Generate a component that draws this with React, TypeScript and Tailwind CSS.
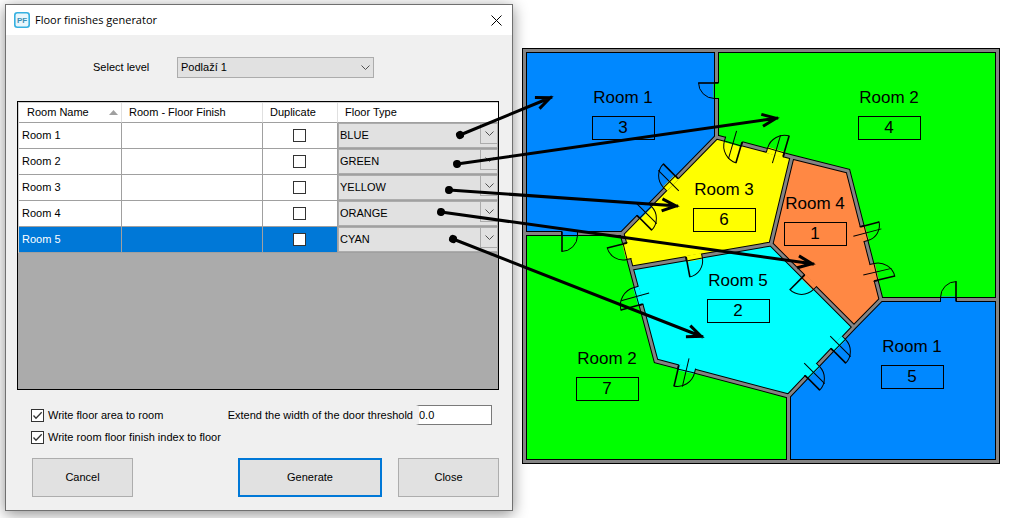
import { useState } from "react"

type Point = [number, number]

interface Room {
  id: number
  name: string
  floorType: string
}

interface DoorProps {
  hinge: Point
  latch: Point
  side: 1 | -1
  fill: string
  axis?: boolean
}

const BLUE = "#0088ff"
const GREEN = "#00ff00"
const YELLOW = "#ffff00"
const ORANGE = "#ff8844"
const CYAN = "#00ffff"

const floorTypes = ["BLUE", "GREEN", "YELLOW", "ORANGE", "CYAN"]

const initialRooms: Room[] = [
  { id: 1, name: "Room 1", floorType: "BLUE" },
  { id: 2, name: "Room 2", floorType: "GREEN" },
  { id: 3, name: "Room 3", floorType: "YELLOW" },
  { id: 4, name: "Room 4", floorType: "ORANGE" },
  { id: 5, name: "Room 5", floorType: "CYAN" },
]

const areas = [
  { fill: BLUE, points: "524,50 716,50 716,137 622,233 524,233" },
  { fill: GREEN, points: "716,50 998,50 998,300 881,300 848,171 716,137" },
  { fill: YELLOW, points: "716,137 792,158 771,244 632,268 622,233" },
  { fill: ORANGE, points: "792,158 848,171 881,300 854,327 771,244" },
  { fill: CYAN, points: "771,244 854,327 788,396 656,361 632,268" },
  { fill: GREEN, points: "524,233 622,233 656,361 788,396 788,462 524,462" },
  { fill: BLUE, points: "881,300 998,300 998,462 788,462 788,396" },
]

const wallPath = [
  "M524.5 50.5H997.5V461.5H524.5Z",
  "M716.5 50.5V137L622 233.5H524.5",
  "M716.5 137L792 157L848 171L881 299.5L854 327L788.5 396V461.5",
  "M792 157L771 244L854 327",
  "M771 244L632 268",
  "M622 233.5L656 361L788.5 396",
  "M881 299.5H997.5",
].join("")

const doors: DoorProps[] = [
  { hinge: [716.5, 82.5], latch: [716.5, 98.5], side: 1, fill: GREEN },
  { hinge: [742, 144], latch: [725, 139], side: -1, fill: GREEN, axis: true },
  { hinge: [784, 155], latch: [767, 150], side: 1, fill: YELLOW, axis: true },
  { hinge: [677, 177], latch: [665, 189], side: 1, fill: YELLOW, axis: true },
  { hinge: [638, 217], latch: [650, 205], side: 1, fill: BLUE, axis: true },
  { hinge: [561.5, 233.5], latch: [577.5, 233.5], side: 1, fill: BLUE },
  { hinge: [625, 243], latch: [629, 259], side: 1, fill: YELLOW },
  { hinge: [641, 305], latch: [636, 287], side: -1, fill: CYAN, axis: true },
  { hinge: [686, 259], latch: [702, 256], side: 1, fill: YELLOW },
  { hinge: [803, 276], latch: [815, 288], side: 1, fill: ORANGE },
  { hinge: [862, 226], latch: [866, 241], side: -1, fill: ORANGE, axis: true },
  { hinge: [876, 281], latch: [872, 264], side: 1, fill: ORANGE, axis: true },
  { hinge: [956.5, 299.5], latch: [940.5, 299.5], side: 1, fill: BLUE },
  { hinge: [678, 367], latch: [695, 371], side: 1, fill: CYAN, axis: true },
  { hinge: [832, 350], latch: [844, 338], side: 1, fill: CYAN, axis: true },
  { hinge: [806, 377], latch: [818, 365], side: 1, fill: CYAN, axis: true },
]

const tags = [
  { x: 592, y: 116, name: "Room 1", index: 3 },
  { x: 858, y: 116, name: "Room 2", index: 4 },
  { x: 693, y: 208, name: "Room 3", index: 6 },
  { x: 784, y: 222, name: "Room 4", index: 1 },
  { x: 707, y: 299, name: "Room 5", index: 2 },
  { x: 576, y: 377, name: "Room 2", index: 7 },
  { x: 881, y: 365, name: "Room 1", index: 5 },
]

const arrows: { from: Point; to: Point }[] = [
  { from: [460, 135], to: [552, 97] },
  { from: [457, 164], to: [778, 118] },
  { from: [449, 190], to: [678, 206] },
  { from: [441, 212], to: [814, 264] },
  { from: [453, 239], to: [703, 337] },
]

function Door({ hinge, latch, side, fill, axis }: DoorProps) {
  const dx = latch[0] - hinge[0]
  const dy = latch[1] - hinge[1]
  const length = Math.hypot(dx, dy)
  const angle = (Math.atan2(dy, dx) * 180) / Math.PI

  return (
    <g transform={`translate(${hinge[0]} ${hinge[1]}) rotate(${angle}) scale(1 ${side})`} stroke="#000" fill="none">
      <rect x={0} y={-3} width={length} height={6} fill={fill} stroke="none" />
      <path d={`M0 -2.5V2.5M${length} -2.5V2.5M0 2H${length}`} strokeWidth={1} />
      <path d={`M0.5 -2V${length + 2}`} strokeWidth={1.6} />
      <path d={`M0 ${length + 2}A${length} ${length} 0 0 0 ${length} 2`} strokeWidth={1} />
      {axis && <path d={`M${length / 2} -11V18`} strokeWidth={1} />}
    </g>
  )
}

function FloorPlan() {
  return (
    <svg
      viewBox="522 48 478 416"
      className="mt-11 block h-auto w-full font-['Liberation_Sans',Arial,sans-serif] text-[17px]"
      role="img"
      aria-label="Floor plan"
    >
      {areas.map((area) => (
        <polygon key={area.points} points={area.points} fill={area.fill} />
      ))}
      <path d={wallPath} fill="none" stroke="#000" strokeWidth={5} />
      <path d={wallPath} fill="none" stroke="#848484" strokeWidth={3} />
      {doors.map((door) => (
        <Door key={door.hinge.join()} {...door} />
      ))}
      {tags.map((tag) => (
        <g key={tag.index} textAnchor="middle">
          <text x={tag.x + 31} y={tag.y - 13}>{tag.name}</text>
          <rect x={tag.x + 0.5} y={tag.y + 0.5} width={62} height={23} fill="none" stroke="#000" />
          <text x={tag.x + 31} y={tag.y + 17}>{tag.index}</text>
        </g>
      ))}
    </svg>
  )
}

function Arrows() {
  return (
    <svg
      viewBox="0 0 1009 518"
      className="pointer-events-none absolute top-0 left-0 h-auto w-full"
      aria-hidden="true"
    >
      {arrows.map(({ from, to }) => {
        const length = Math.hypot(to[0] - from[0], to[1] - from[1])
        const angle = (Math.atan2(to[1] - from[1], to[0] - from[0]) * 180) / Math.PI
        return (
          <g
            key={from.join()}
            transform={`translate(${from[0]} ${from[1]}) rotate(${angle})`}
            stroke="#000"
            strokeWidth={3}
            fill="none"
          >
            <circle r={4} fill="#000" stroke="none" />
            <path d={`M0 0H${length}M${length - 16} -6L${length - 2} 0L${length - 16} 6`} />
          </g>
        )
      })}
    </svg>
  )
}

function Chevron() {
  return (
    <svg viewBox="0 0 9 6" className="h-[6px] w-[9px]" fill="none" stroke="#505050" aria-hidden="true">
      <path d="M0.5 0.5L4.5 4.5L8.5 0.5" />
    </svg>
  )
}

function CheckOption({ id, label }: { id: string; label: string }) {
  return (
    <div className="flex h-[22px] items-center gap-1">
      <span className="relative flex">
        <input
          type="checkbox"
          id={id}
          defaultChecked
          className="peer h-[13px] w-[13px] appearance-none border border-[#333] bg-white"
        />
        <svg
          viewBox="0 0 13 13"
          className="pointer-events-none absolute inset-0 hidden h-[13px] w-[13px] peer-checked:block"
          fill="none"
          stroke="#333"
          strokeWidth={1.3}
          aria-hidden="true"
        >
          <path d="M2.5 6.5L5 9.2L10.7 3.2" />
        </svg>
      </span>
      <label htmlFor={id}>{label}</label>
    </div>
  )
}

export default function App() {
  const [rooms, setRooms] = useState<Room[]>(initialRooms)
  const [selectedId, setSelectedId] = useState<number>(5)

  const handleTypeChange = (id: number, floorType: string) => {
    setRooms(rooms.map((room) => (room.id === id ? { ...room, floorType } : room)))
  }

  return (
    <main className="relative grid grid-cols-[508fr_478fr] items-start gap-[9px] bg-white pt-1 pr-[9px] pb-[7px] pl-[5px] text-black">
      <section className="border border-[#707070] bg-[#f0f0f0] font-['Liberation_Sans',Arial,sans-serif] text-[11px] shadow-[0_3px_14px_rgba(0,0,0,0.45)]">
        <header className="flex h-[30px] items-center bg-white pr-[10px] pl-2">
          <svg viewBox="0 0 16 16" className="h-4 w-4" aria-hidden="true">
            <rect x="0.8" y="0.8" width="14.4" height="14.4" rx="2.5" fill="#e8f6fc" stroke="#35b0e0" strokeWidth="1.6" />
            <text x="8" y="11" textAnchor="middle" fontSize="8" fontWeight="700" fill="#3a8fb5">PF</text>
          </svg>
          <h1 className="ml-[5px] font-['Open_Sans',sans-serif] text-[11px]">Floor finishes generator</h1>
          <button type="button" aria-label="Close window" className="ml-auto">
            <svg viewBox="0 0 11 11" className="h-[11px] w-[11px]" stroke="#000" aria-hidden="true">
              <path d="M0.5 0.5L10.5 10.5M10.5 0.5L0.5 10.5" />
            </svg>
          </button>
        </header>

        <form className="pt-[22px] pr-[13px] pb-[13px] pl-[11px]" onSubmit={(e) => e.preventDefault()}>
          <div className="flex items-center pl-[76px]">
            <label htmlFor="level" className="w-[84px]">Select level</label>
            <div className="relative w-[197px]">
              <select
                id="level"
                className="block h-[21px] w-full appearance-none border border-[#acacac] bg-[#e1e1e1] pl-[3px]"
              >
                <option>Podlaží 1</option>
              </select>
              <span className="pointer-events-none absolute inset-y-0 right-1 flex items-center">
                <Chevron />
              </span>
            </div>
          </div>

          <div className="mt-[23px] min-h-[289px] border border-black bg-[#ababab]">
            <table className="w-full table-fixed border-separate border-spacing-0 border-t border-l border-[#d0d0d0] text-left">
              <thead>
                <tr className="h-5 bg-white">
                  <th className="w-[103px] border-r border-b border-r-[#e0e0e0] border-b-[#a0a0a0] p-0 pr-[3px] pl-2 font-normal">
                    <span className="flex items-center justify-between">
                      Room Name
                      <svg viewBox="0 0 9 5" className="h-[5px] w-[9px]" fill="#a0a0a0" aria-hidden="true">
                        <path d="M0 5L4.5 0L9 5Z" />
                      </svg>
                    </span>
                  </th>
                  <th className="w-[141px] border-r border-b border-r-[#e0e0e0] border-b-[#a0a0a0] p-0 pl-[7px] font-normal">
                    Room - Floor Finish
                  </th>
                  <th className="w-[75px] border-r border-b border-r-[#e0e0e0] border-b-[#a0a0a0] p-0 pl-[7px] font-normal">
                    Duplicate
                  </th>
                  <th className="border-b border-[#a0a0a0] p-0 pl-[7px] font-normal">Floor Type</th>
                </tr>
              </thead>
              <tbody>
                {rooms.map((room) => (
                  <tr
                    key={room.id}
                    onClick={() => setSelectedId(room.id)}
                    className={room.id === selectedId ? "h-[26px] bg-[#0078d7] text-white" : "h-[26px] bg-white"}
                  >
                    <td className="border-r border-b border-[#a0a0a0] p-0 pl-[3px]">{room.name}</td>
                    <td className="border-r border-b border-[#a0a0a0] p-0"></td>
                    <td className="border-r border-b border-[#a0a0a0] p-0 pr-[2px]">
                      <input
                        type="checkbox"
                        aria-label={`Duplicate ${room.name}`}
                        className="mx-auto block h-[13px] w-[13px] appearance-none border border-[#333] bg-white checked:bg-[#333]"
                      />
                    </td>
                    <td className="border-b border-[#a0a0a0] p-0">
                      <div className="relative">
                        <select
                          aria-label={`Floor type of ${room.name}`}
                          value={room.floorType}
                          onChange={(e) => handleTypeChange(room.id, e.target.value)}
                          className="block h-[25px] w-full appearance-none border border-[#acacac] bg-[#e1e1e1] pl-px text-black"
                        >
                          {floorTypes.map((type) => (
                            <option key={type}>{type}</option>
                          ))}
                        </select>
                        <span className="pointer-events-none absolute top-px right-px flex h-5 w-[17px] items-center justify-center border-b border-l border-[#acacac]">
                          <Chevron />
                        </span>
                      </div>
                    </td>
                  </tr>
                ))}
              </tbody>
            </table>
          </div>

          <div className="mt-[14px] flex items-start justify-between pr-[7px] pl-[14px]">
            <div>
              <CheckOption id="write-area" label="Write floor area to room" />
              <CheckOption id="write-index" label="Write room floor finish index to floor" />
            </div>
            <div className="flex h-[22px] items-center gap-[3px]">
              <label htmlFor="threshold">Extend the width of the door threshold</label>
              <input
                id="threshold"
                type="text"
                defaultValue="0.0"
                className="h-5 w-[76px] border border-l-[3px] border-[#7a7a7a] border-l-[#f0f0f0] bg-white"
              />
            </div>
          </div>

          <div className="mt-[10px] flex gap-4 pl-[15px]">
            <button type="button" className="h-[39px] w-[101px] border border-[#adadad] bg-[#e1e1e1]">
              Cancel
            </button>
            <button type="submit" className="ml-auto h-[39px] w-[144px] border-2 border-[#0078d7] bg-[#e1e1e1]">
              Generate
            </button>
            <button type="button" className="h-[39px] w-[101px] border border-[#adadad] bg-[#e1e1e1]">
              Close
            </button>
          </div>
        </form>
      </section>

      <FloorPlan />
      <Arrows />
    </main>
  )
}
